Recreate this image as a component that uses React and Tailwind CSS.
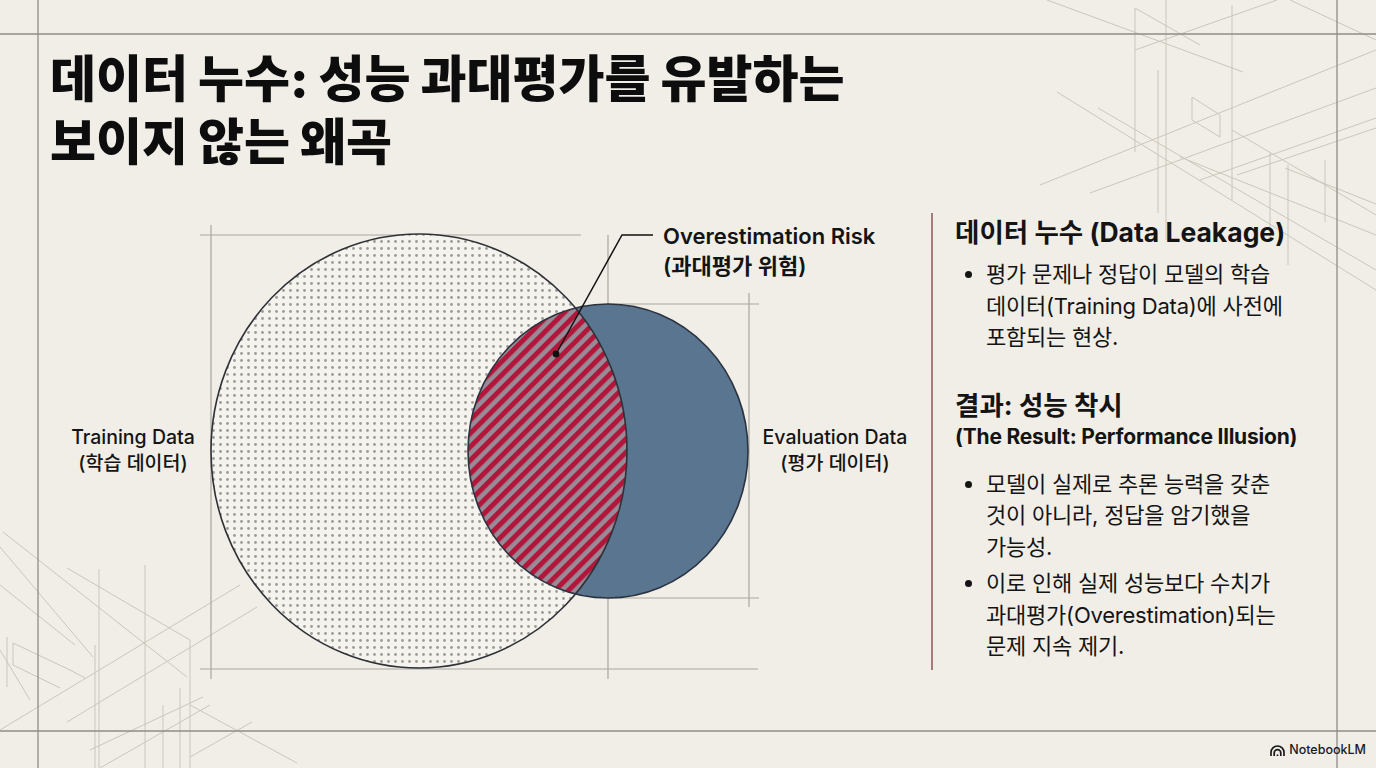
import React from 'react'

// ─── Background drafting lines ───────────────────────────────────────────────

const FRAME = [
  [0, 34, 1376, 34],
  [0, 731, 1376, 731],
  [38, 0, 38, 768],
  [1337, 0, 1337, 768],
]

const SKETCH = [
  // top right cluster
  [1047, 0, 1243, 72],
  [1135, 8, 1135, 152],
  [1135, 8, 1200, 45],
  [1166, 0, 1166, 240],
  [1232, 5, 1232, 200],
  [1057, 92, 1376, 290],
  [1098, 108, 1376, 270],
  [1040, 185, 1376, 50],
  [1090, 193, 1376, 88],
  [1135, 50, 1277, 0],
  [1158, 70, 1158, 213],
  [1192, 97, 1220, 115],
  [1220, 115, 1220, 137],
  [1192, 97, 1192, 120],
  [1192, 120, 1220, 137],
  [1200, 180, 1376, 118],
  [1237, 175, 1376, 128],
  [1232, 130, 1376, 215],
  [1270, 153, 1270, 240],
  [1285, 168, 1376, 204],
  [1288, 165, 1288, 265],
  [1325, 160, 1325, 222],
  [1180, 157, 1376, 235],
  [1290, 0, 1376, 40],
  // bottom left cluster
  [99, 569, 99, 768],
  [145, 565, 145, 768],
  [190, 640, 190, 768],
  [95, 645, 95, 768],
  [163, 705, 163, 768],
  [180, 688, 180, 768],
  [3, 532, 187, 677],
  [0, 547, 93, 657],
  [0, 585, 75, 645],
  [67, 568, 190, 640],
  [0, 730, 240, 585],
  [67, 722, 257, 607],
  [90, 750, 203, 697],
  [100, 768, 210, 705],
  [190, 705, 297, 763],
  [190, 757, 252, 722],
  [13, 643, 70, 670],
  [13, 643, 13, 665],
  [13, 665, 60, 688],
  [70, 670, 85, 678],
  [7, 637, 7, 687],
  [0, 650, 30, 700],
]

function Backdrop() {
  return (
    <svg className="absolute inset-0 pointer-events-none" width="1376" height="768" viewBox="0 0 1376 768">
      {SKETCH.map(([x1, y1, x2, y2], i) => (
        <line key={`s${i}`} x1={x1} y1={y1} x2={x2} y2={y2} stroke="#cbc6bb" strokeWidth="1" />
      ))}
      {FRAME.map(([x1, y1, x2, y2], i) => (
        <line key={`f${i}`} x1={x1} y1={y1} x2={x2} y2={y2} stroke="#8e8c86" strokeWidth="1.3" />
      ))}
    </svg>
  )
}

// ─── Venn diagram ────────────────────────────────────────────────────────────

const BIG = { cx: 419, cy: 451, rx: 208, ry: 217 }
const EVAL = { cx: 608, cy: 451, rx: 140, ry: 147 }

function Venn() {
  return (
    <svg className="block" width="930" height="500" viewBox="0 200 930 500">
      <defs>
        <pattern id="dots" width="7" height="7" patternUnits="userSpaceOnUse">
          <circle cx="3.5" cy="3.5" r="1.4" fill="#9e9b95" />
        </pattern>
        <pattern id="stripes" width="9.5" height="9.5" patternUnits="userSpaceOnUse" patternTransform="rotate(45)">
          <rect width="9.5" height="9.5" fill="#978b98" />
          <rect width="5" height="9.5" fill="#b2173b" />
        </pattern>
        <clipPath id="bigClip">
          <ellipse cx={BIG.cx} cy={BIG.cy} rx={BIG.rx} ry={BIG.ry} />
        </clipPath>
      </defs>

      {/* guide lines */}
      <g stroke="#a9a69f" strokeWidth="1.2">
        <line x1="200" y1="235" x2="581" y2="235" />
        <line x1="211" y1="225" x2="211" y2="679" />
        <line x1="200" y1="669" x2="758" y2="669" />
        <line x1="608" y1="235" x2="608" y2="679" />
        <line x1="608" y1="304" x2="759" y2="304" />
        <line x1="608" y1="598" x2="759" y2="598" />
        <line x1="749" y1="293" x2="749" y2="607" />
      </g>

      {/* training data */}
      <ellipse cx={BIG.cx} cy={BIG.cy} rx={BIG.rx} ry={BIG.ry} fill="#f5f3ee" />
      <ellipse cx={BIG.cx} cy={BIG.cy} rx={BIG.rx} ry={BIG.ry} fill="url(#dots)" />

      {/* evaluation data */}
      <ellipse cx={EVAL.cx} cy={EVAL.cy} rx={EVAL.rx} ry={EVAL.ry} fill="#597590" />

      {/* overlap */}
      <ellipse cx={EVAL.cx} cy={EVAL.cy} rx={EVAL.rx} ry={EVAL.ry} fill="url(#stripes)" clipPath="url(#bigClip)" />

      <ellipse cx={BIG.cx} cy={BIG.cy} rx={BIG.rx} ry={BIG.ry} fill="none" stroke="#2e3236" strokeWidth="1.6" />
      <ellipse cx={EVAL.cx} cy={EVAL.cy} rx={EVAL.rx} ry={EVAL.ry} fill="none" stroke="#2b3440" strokeWidth="1.6" />

      {/* leader */}
      <polyline points="556,354 622,235 653,235" fill="none" stroke="#111" strokeWidth="1.5" />
      <circle cx="556" cy="354" r="3.4" fill="#111" />
    </svg>
  )
}

function Diagram() {
  return (
    <div className="relative w-[931px] h-[500px] shrink-0">
      <Venn />
      <div className="absolute left-[52px] top-[224px] w-[162px] text-center text-[19.5px] leading-[26px] font-medium text-[#141414]">
        <div>Training Data</div>
        <div>(학습 데이터)</div>
      </div>
      <div className="absolute left-[752px] top-[224px] w-[166px] text-center text-[19.5px] leading-[26px] font-medium text-[#141414]">
        <div>Evaluation Data</div>
        <div>(평가 데이터)</div>
      </div>
      <div className="absolute left-[663px] top-[21px] text-[22px] leading-[30px] font-semibold text-[#141414]">
        <div>Overestimation Risk</div>
        <div>(과대평가 위험)</div>
      </div>
    </div>
  )
}

// ─── Right panel ─────────────────────────────────────────────────────────────

function Bullet({ children }) {
  return (
    <li className="flex">
      <span className="mt-[12px] ml-[10px] mr-[14px] w-[7px] h-[7px] rounded-full bg-[#141414] shrink-0" />
      <span>{children}</span>
    </li>
  )
}

function Panel() {
  return (
    <div className="mt-[13px] h-[457px] border-l-2 border-[#a67c78] pl-[22px] pt-[2px] text-[#141414]">
      <h2 className="text-[26.5px] leading-[34px] font-bold">데이터 누수 (Data Leakage)</h2>
      <ul className="mt-[10px] text-[22px] leading-[31.5px] tracking-[-0.01em]">
        <Bullet>
          평가 문제나 정답이 모델의 학습
          <br />
          데이터(Training Data)에 사전에
          <br />
          포함되는 현상.
        </Bullet>
      </ul>

      <h2 className="mt-[34px] text-[26.5px] leading-[34px] font-bold">결과: 성능 착시</h2>
      <div className="text-[21px] leading-[30px] font-bold tracking-[-0.01em]">(The Result: Performance Illusion)</div>

      <ul className="mt-[17px] flex flex-col gap-[5px] text-[22px] leading-[31.5px] tracking-[-0.01em]">
        <Bullet>
          모델이 실제로 추론 능력을 갖춘
          <br />
          것이 아니라, 정답을 암기했을
          <br />
          가능성.
        </Bullet>
        <Bullet>
          이로 인해 실제 성능보다 수치가
          <br />
          과대평가(Overestimation)되는
          <br />
          문제 지속 제기.
        </Bullet>
      </ul>
    </div>
  )
}

// ─── Page ────────────────────────────────────────────────────────────────────

export default function App() {
  return (
    <div className="relative w-[1376px] h-[768px] overflow-hidden bg-[#f1eee8] font-['Inter','Noto_Sans_CJK_KR',sans-serif]">
      <Backdrop />

      <div className="relative flex flex-col">
        <h1 className="pt-[48px] pl-[50px] text-[50px] leading-[63px] font-black text-[#0d0d0d]">
          데이터 누수: 성능 과대평가를 유발하는
          <br />
          보이지 않는 왜곡
        </h1>

        <div className="mt-[26px] flex">
          <Diagram />
          <Panel />
        </div>
      </div>

      {/* watermark */}
      <div className="absolute right-[10px] bottom-[8px] flex items-center gap-[4px] text-[12.5px] font-medium text-[#1a1a1a]">
        <svg width="15" height="11" viewBox="0 0 15 11" fill="none" stroke="#1a1a1a" strokeWidth="1.7">
          <path d="M1 11 V7.5 A6.5 6.5 0 0 1 14 7.5 V11" />
          <path d="M4.2 11 V8 A3.3 3.3 0 0 1 10.8 8 V11" />
          <path d="M7.5 11 V9.5" />
        </svg>
        <span>NotebookLM</span>
      </div>
    </div>
  )
}
